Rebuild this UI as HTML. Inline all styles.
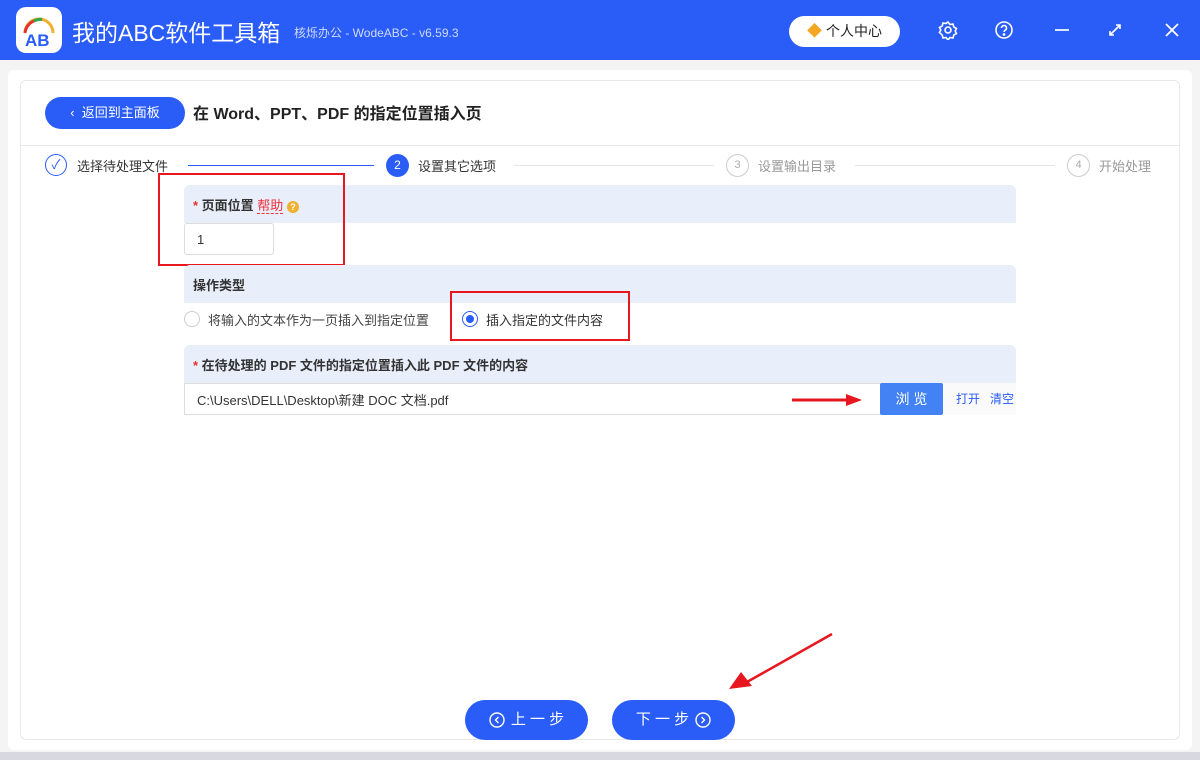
<!DOCTYPE html>
<html><head><meta charset="utf-8"><style>
*{box-sizing:border-box;margin:0;padding:0}
body{width:1200px;height:760px;overflow:hidden;background:#f4f4f4;font-family:"Liberation Sans","Noto Sans CJK SC",sans-serif;position:relative;font-size:13px;color:#333;line-height:1.2}
.abs{position:absolute}
.top{left:0;top:0;width:1200px;height:60px;background:#2a5cf8}
.card{left:8px;top:70px;width:1184px;height:680px;background:#fff;border-radius:6px}
.inner{left:20px;top:80px;width:1160px;height:660px;border:1px solid #e8e8e8;border-radius:6px;background:#fff}
.sec{background:#e8eefa;border-radius:6px 6px 0 0}
.red{border:2px solid #e8161f}
.btn{background:#2a5cf8;color:#fff;border-radius:20px;font-size:15px;display:flex;align-items:center;justify-content:center;gap:6px}
</style></head><body>
<div class="abs top"></div>
<div class="abs" style="left:16px;top:7px;width:46px;height:46px;background:#fff;border-radius:10px"></div>
<svg class="abs" style="left:16px;top:7px" width="46" height="46"><path d="M9 26 A14 14 0 0 1 37 26" fill="none" stroke="#f0b030" stroke-width="3"/><path d="M9 26 A14 14 0 0 1 18 14" fill="none" stroke="#e8322e" stroke-width="3"/><path d="M18 14 A14 14 0 0 1 26 12.5" fill="none" stroke="#2ea84a" stroke-width="3"/><text x="9" y="39" font-size="17" font-weight="bold" fill="#2a5cf8" font-family="Liberation Sans">AB</text></svg>
<div class="abs" style="left:72px;top:20px;color:#fff;font-size:23px">我的ABC软件工具箱</div>
<div class="abs" style="left:294px;top:26px;color:#cfdafc;font-size:12px">核烁办公 - WodeABC - v6.59.3</div>
<div class="abs" style="left:789px;top:16px;width:111px;height:31px;background:#fff;border-radius:16px;font-size:14px;color:#222;display:flex;align-items:center;justify-content:center;gap:4px"><span style="color:#f5a623;font-size:15px">◆</span>个人中心</div>
<svg class="abs" style="left:938px;top:20px" width="20" height="20" fill="none" stroke="#fff" stroke-width="1.6"><circle cx="10" cy="10" r="3"/><path d="M10 2l2 2.5 3-.5.8 3 2.7 1.5-1.3 2.5 1.3 2.5-2.7 1.5-.8 3-3-.5-2 2.5-2-2.5-3 .5-.8-3L1.5 12.5 2.8 10 1.5 7.5 4.2 6 5 3l3 .5z"/></svg>
<svg class="abs" style="left:994px;top:20px" width="20" height="20" fill="none" stroke="#fff" stroke-width="1.6"><circle cx="10" cy="10" r="8"/><path d="M7.5 8a2.5 2.5 0 1 1 3.5 2.3c-.7.4-1 .9-1 1.7"/><circle cx="10" cy="14.5" r=".6" fill="#fff"/></svg>
<div class="abs" style="left:1055px;top:29px;width:14px;height:2px;background:#dfe6ff"></div>
<svg class="abs" style="left:1107px;top:22px" width="16" height="16" stroke="#fff" stroke-width="1.6"><path d="M3 13L13 3M9 3h4v4M3 9v4h4" fill="none"/></svg>
<svg class="abs" style="left:1164px;top:22px" width="16" height="16" stroke="#fff" stroke-width="1.8"><path d="M2 2L14 14M14 2L2 14"/></svg>
<div class="abs card"></div>
<div class="abs inner"></div>
<div class="abs btn" style="left:45px;top:97px;width:140px;height:32px;font-size:13px">‹&nbsp; 返回到主面板</div>
<div class="abs" style="left:193px;top:105px;font-size:16px;font-weight:bold;color:#222">在 Word、PPT、PDF 的指定位置插入页</div>
<div class="abs" style="left:21px;top:145px;width:1158px;height:1px;background:#e8e8e8"></div>
<div class="abs" style="left:45px;top:154px;width:22px;height:22px;border:1.5px solid #2a5cf8;border-radius:50%;color:#2a5cf8;font-size:13px;text-align:center;line-height:19px">✓</div>
<div class="abs" style="left:77px;top:159px;font-size:13px">选择待处理文件</div>
<div class="abs" style="left:188px;top:165px;width:186px;height:1px;background:#2a5cf8"></div>
<div class="abs" style="left:386px;top:154px;width:23px;height:23px;background:#2a5cf8;border-radius:50%;color:#fff;font-size:12px;text-align:center;line-height:23px">2</div>
<div class="abs" style="left:418px;top:159px">设置其它选项</div>
<div class="abs" style="left:514px;top:165px;width:200px;height:1px;background:#e5e5e5"></div>
<div class="abs" style="left:726px;top:154px;width:23px;height:23px;border:1px solid #ccc;border-radius:50%;color:#aaa;font-size:11px;text-align:center;line-height:21px">3</div>
<div class="abs" style="left:758px;top:159px;color:#999">设置输出目录</div>
<div class="abs" style="left:855px;top:165px;width:200px;height:1px;background:#e5e5e5"></div>
<div class="abs" style="left:1067px;top:154px;width:23px;height:23px;border:1px solid #ccc;border-radius:50%;color:#aaa;font-size:11px;text-align:center;line-height:21px">4</div>
<div class="abs" style="left:1099px;top:159px;color:#999">开始处理</div>

<div class="abs sec" style="left:184px;top:185px;width:832px;height:38px"></div>
<div class="abs" style="left:193px;top:198px;font-weight:bold"><span style="color:#e8322e">*</span> 页面位置 <span style="color:#f0303a;font-weight:normal;border-bottom:1px dashed #f0303a">帮助</span> <span style="display:inline-block;width:12px;height:12px;border-radius:50%;background:#f0b030;color:#fff;font-size:9px;text-align:center;line-height:12px;vertical-align:middle">?</span></div>
<div class="abs" style="left:184px;top:223px;width:90px;height:32px;border:1px solid #ddd;border-radius:3px;padding:8px 12px">1</div>
<div class="abs red" style="left:158px;top:173px;width:187px;height:93px"></div>

<div class="abs sec" style="left:184px;top:265px;width:832px;height:38px"></div>
<div class="abs" style="left:193px;top:278px;font-weight:bold">操作类型</div>
<div class="abs" style="left:184px;top:311px;width:16px;height:16px;border:1px solid #ccc;border-radius:50%"></div>
<div class="abs" style="left:208px;top:313px;color:#444">将输入的文本作为一页插入到指定位置</div>
<div class="abs" style="left:462px;top:311px;width:16px;height:16px;border:1px solid #2a5cf8;border-radius:50%"></div>
<div class="abs" style="left:466px;top:315px;width:8px;height:8px;background:#2a5cf8;border-radius:50%"></div>
<div class="abs" style="left:486px;top:313px;color:#333">插入指定的文件内容</div>
<div class="abs red" style="left:450px;top:291px;width:180px;height:50px"></div>

<div class="abs sec" style="left:184px;top:345px;width:832px;height:38px"></div>
<div class="abs" style="left:193px;top:358px;font-weight:bold"><span style="color:#e8322e">*</span> 在待处理的 PDF 文件的指定位置插入此 PDF 文件的内容</div>
<div class="abs" style="left:184px;top:383px;width:698px;height:32px;border:1px solid #ddd;padding:9px 12px 0;color:#333">C:\Users\DELL\Desktop\新建 DOC 文档.pdf</div>
<div class="abs" style="left:880px;top:383px;width:63px;height:32px;background:#4282f5;color:#fff;font-size:14px;text-align:center;line-height:32px;border-radius:2px">浏 览</div>
<div class="abs" style="left:943px;top:383px;width:73px;height:32px;background:#fafafa;color:#2a5cf8;font-size:12px;line-height:32px;padding-left:13px">打开&nbsp;&nbsp; 清空</div>
<svg class="abs" style="left:790px;top:392px" width="80" height="16"><path d="M2 8H60" stroke="#e8161f" stroke-width="3"/><path d="M56 2L72 8L56 14z" fill="#e8161f"/></svg>
<svg class="abs" style="left:725px;top:630px" width="112" height="62"><path d="M107 4L22 52" stroke="#e8161f" stroke-width="2.5"/><path d="M4 59L16 42L27 56z" fill="#e8161f"/></svg>

<div class="abs btn" style="left:465px;top:700px;width:123px;height:40px">
<svg width="16" height="16" fill="none" stroke="#fff" stroke-width="1.4"><circle cx="8" cy="8" r="7"/><path d="M9.5 5L6.5 8l3 3"/></svg> 上 一 步</div>
<div class="abs btn" style="left:612px;top:700px;width:123px;height:40px">下 一 步 <svg width="16" height="16" fill="none" stroke="#fff" stroke-width="1.4"><circle cx="8" cy="8" r="7"/><path d="M6.5 5l3 3-3 3"/></svg></div>
<div class="abs" style="left:0;top:752px;width:1200px;height:8px;background:#d8d8e0"></div>
</body></html>
